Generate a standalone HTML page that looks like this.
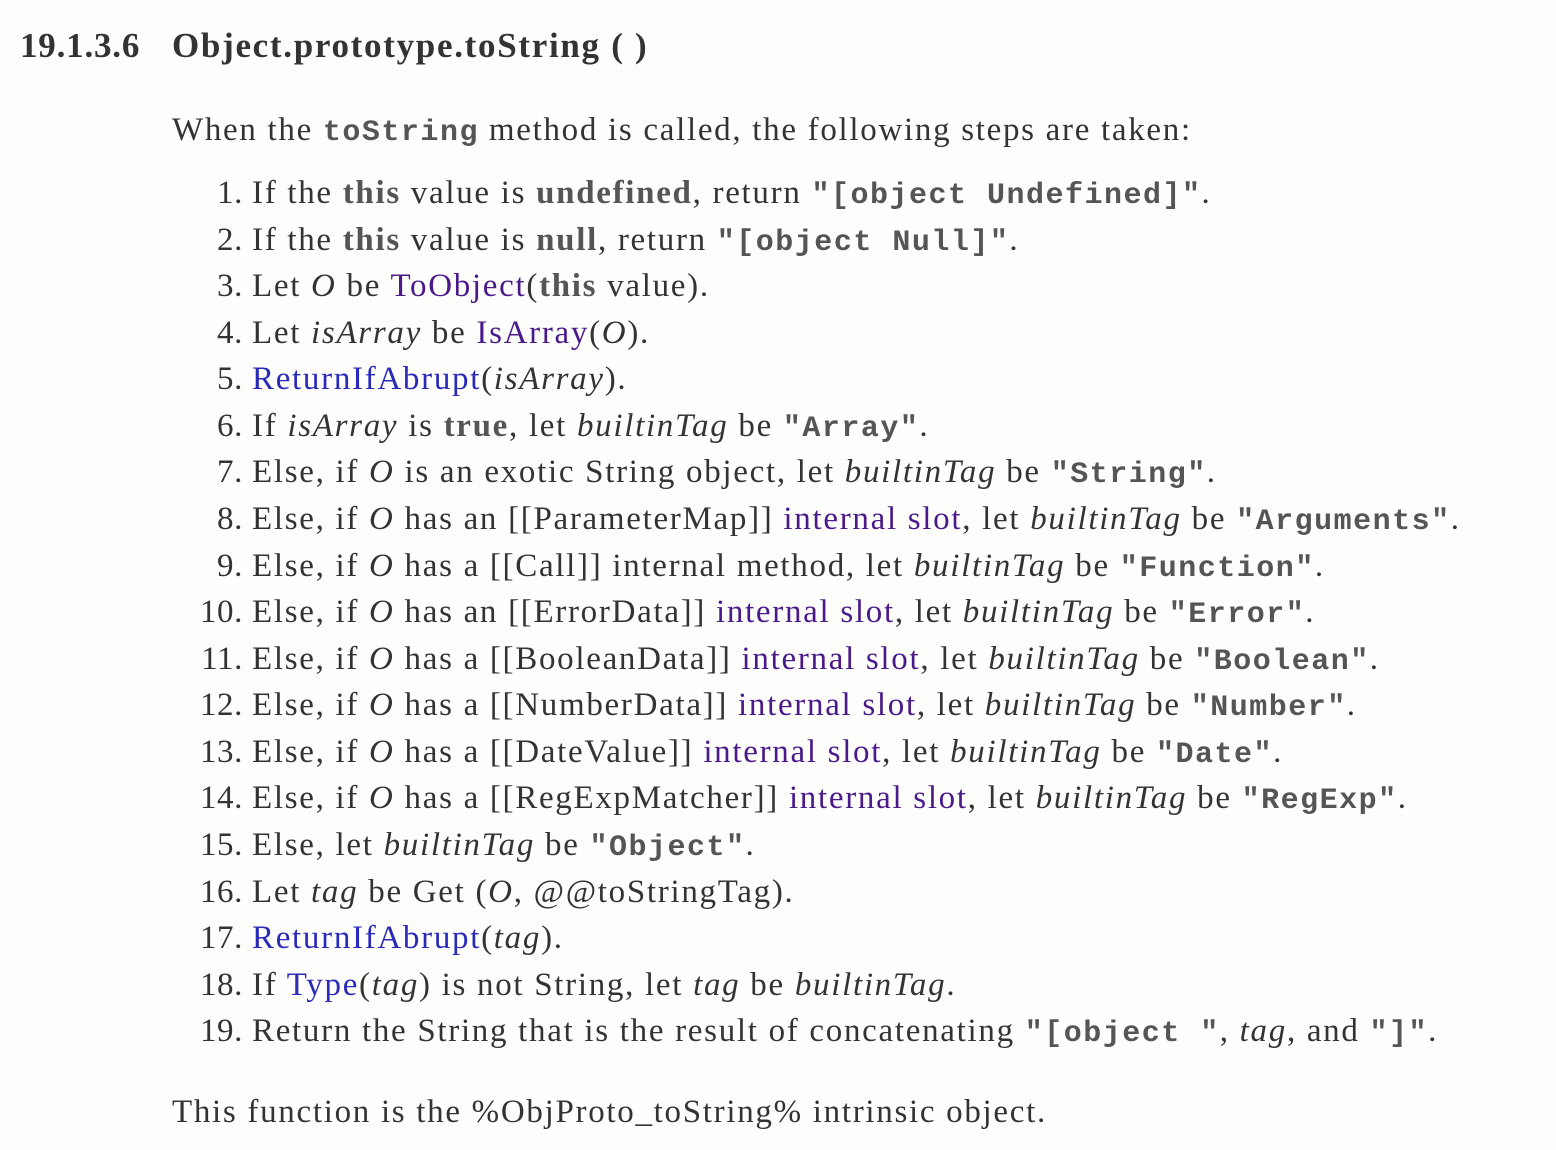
<!DOCTYPE html>
<html><head><meta charset="utf-8"><style>
html,body{margin:0;padding:0;background:#fdfdfc;width:1556px;height:1150px;overflow:hidden}
body{font-family:"Liberation Serif",serif;color:#333;font-size:33px;letter-spacing:1.7px;position:relative}
.l{position:absolute;left:0;white-space:nowrap;height:46px;line-height:46px}
.n{display:inline-block;width:243px;text-align:right;letter-spacing:0.6px}
.t{margin-left:9px}
b{color:#555}
code{font-family:"Liberation Mono",monospace;font-weight:bold;color:#555;font-size:30px;letter-spacing:1.5px}
.v{color:#4b1a8a}.a{color:#2a2ab8}
h1{position:absolute;top:22px;left:20px;margin:0;font-size:35px;font-weight:bold;color:#333;line-height:48px;letter-spacing:0.8px}
h1 span{letter-spacing:1.7px}
</style></head><body>
<h1>19.1.3.6<span style="position:absolute;left:152px;white-space:nowrap">Object.prototype.toString ( )</span></h1>
<div class="l" style="top:107px;left:172px">When the <code>toString</code> method is called, the following steps are taken:</div>
<div class="l" style="top:170px"><span class="n">1.</span><span class="t">If the <b>this</b> value is <b>undefined</b>, return <code>"[object Undefined]"</code>.</span></div>
<div class="l" style="top:217px"><span class="n">2.</span><span class="t">If the <b>this</b> value is <b>null</b>, return <code>"[object Null]"</code>.</span></div>
<div class="l" style="top:263px"><span class="n">3.</span><span class="t">Let <i>O</i> be <span class="v">ToObject</span>(<b>this</b> value).</span></div>
<div class="l" style="top:310px"><span class="n">4.</span><span class="t">Let <i>isArray</i> be <span class="v">IsArray</span>(<i>O</i>).</span></div>
<div class="l" style="top:356px"><span class="n">5.</span><span class="t"><span class="a">ReturnIfAbrupt</span>(<i>isArray</i>).</span></div>
<div class="l" style="top:403px"><span class="n">6.</span><span class="t">If <i>isArray</i> is <b>true</b>, let <i>builtinTag</i> be <code>"Array"</code>.</span></div>
<div class="l" style="top:449px"><span class="n">7.</span><span class="t">Else, if <i>O</i> is an exotic String object, let <i>builtinTag</i> be <code>"String"</code>.</span></div>
<div class="l" style="top:496px"><span class="n">8.</span><span class="t">Else, if <i>O</i> has an [[ParameterMap]] <span class="v">internal slot</span>, let <i>builtinTag</i> be <code>"Arguments"</code>.</span></div>
<div class="l" style="top:543px"><span class="n">9.</span><span class="t">Else, if <i>O</i> has a [[Call]] internal method, let <i>builtinTag</i> be <code>"Function"</code>.</span></div>
<div class="l" style="top:589px"><span class="n">10.</span><span class="t">Else, if <i>O</i> has an [[ErrorData]] <span class="v">internal slot</span>, let <i>builtinTag</i> be <code>"Error"</code>.</span></div>
<div class="l" style="top:636px"><span class="n">11.</span><span class="t">Else, if <i>O</i> has a [[BooleanData]] <span class="v">internal slot</span>, let <i>builtinTag</i> be <code>"Boolean"</code>.</span></div>
<div class="l" style="top:682px"><span class="n">12.</span><span class="t">Else, if <i>O</i> has a [[NumberData]] <span class="v">internal slot</span>, let <i>builtinTag</i> be <code>"Number"</code>.</span></div>
<div class="l" style="top:729px"><span class="n">13.</span><span class="t">Else, if <i>O</i> has a [[DateValue]] <span class="v">internal slot</span>, let <i>builtinTag</i> be <code>"Date"</code>.</span></div>
<div class="l" style="top:775px"><span class="n">14.</span><span class="t">Else, if <i>O</i> has a [[RegExpMatcher]] <span class="v">internal slot</span>, let <i>builtinTag</i> be <code>"RegExp"</code>.</span></div>
<div class="l" style="top:822px"><span class="n">15.</span><span class="t">Else, let <i>builtinTag</i> be <code>"Object"</code>.</span></div>
<div class="l" style="top:869px"><span class="n">16.</span><span class="t">Let <i>tag</i> be Get (<i>O</i>, @@toStringTag).</span></div>
<div class="l" style="top:915px"><span class="n">17.</span><span class="t"><span class="a">ReturnIfAbrupt</span>(<i>tag</i>).</span></div>
<div class="l" style="top:962px"><span class="n">18.</span><span class="t">If <span class="a">Type</span>(<i>tag</i>) is not String, let <i>tag</i> be <i>builtinTag</i>.</span></div>
<div class="l" style="top:1008px"><span class="n">19.</span><span class="t">Return the String that is the result of concatenating <code>"[object "</code>, <i>tag</i>, and <code>"]"</code>.</span></div>
<div class="l" style="top:1089px;left:172px">This function is the %ObjProto_toString% intrinsic object.</div>
</body></html>
